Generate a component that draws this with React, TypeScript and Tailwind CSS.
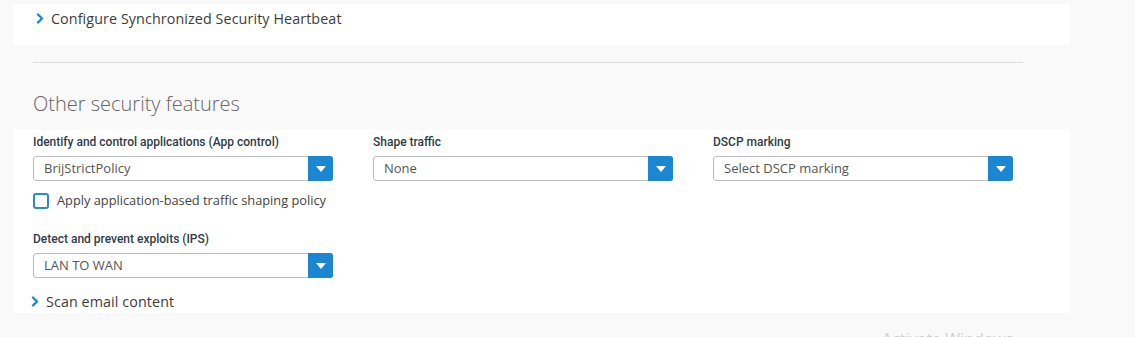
import React from 'react'

const body = { fontFamily: '"Open Sans", "Liberation Sans", sans-serif' }
const labelFont = { fontFamily: 'Roboto, "Liberation Sans", sans-serif' }

function Chevron() {
  return (
    <svg width="8" height="11" viewBox="0 0 8 11" className="shrink-0">
      <path d="M2 1.5 L6 5.5 L2 9.5" stroke="#1b87d2" strokeWidth="2.4" fill="none" strokeLinecap="round" strokeLinejoin="round" />
    </svg>
  )
}

function Select({ value }: { value: string }) {
  return (
    <div className="flex h-[25px] w-[300px] rounded-[3px] border border-[#b9bcc0] bg-white">
      <div className="flex flex-1 items-center pl-[10px] text-[13px] text-[#555]">{value}</div>
      <div className="-my-px -mr-px flex w-[25px] items-center justify-center rounded-r-[3px] bg-[#1b87d2]">
        <svg width="10" height="6" viewBox="0 0 10 6">
          <path d="M0 0 H10 L5 6 Z" fill="#fff" />
        </svg>
      </div>
    </div>
  )
}

function Field({ label, value }: { label: string; value: string }) {
  return (
    <div className="w-[300px]">
      <div className="mb-[4px] h-[20px] text-[12px] font-medium leading-[20px] text-[#2f3b48]" style={labelFont}>
        {label}
      </div>
      <Select value={value} />
    </div>
  )
}

export default function App() {
  return (
    <div className="relative h-[337px] w-[1135px] overflow-hidden bg-[#f9f9f9] pt-[4px]" style={body}>
      {/* Heartbeat panel */}
      <div className="ml-[13px] flex h-[41px] w-[1057px] items-start gap-[7px] bg-white pl-[23px] pt-[6px]">
        <div className="mt-[3px]"><Chevron /></div>
        <span className="text-[14.3px] leading-[17px] tracking-[0.1px] text-[#3c3c3c]">
          Configure Synchronized Security Heartbeat
        </span>
      </div>

      <div className="ml-[33px] mt-[17px] h-[1px] w-[990px] bg-[#dcdcdc]" />

      <h2 className="ml-[33px] mt-[29px] text-[20px] font-light leading-[24px] text-[#666]">Other security features</h2>

      {/* Features panel */}
      <div className="ml-[13px] mt-[13px] h-[184px] w-[1057px] bg-white pl-[20px] pt-[3px]">
        <div className="flex gap-[40px]">
          <Field label="Identify and control applications (App control)" value="BrijStrictPolicy" />
          <Field label="Shape traffic" value="None" />
          <Field label="DSCP marking" value="Select DSCP marking" />
        </div>

        <label className="mt-[10px] flex items-center gap-[8px]">
          <span className="h-[16px] w-[16px] rounded-[3px] border-[2px] border-[#2a8bd4]" />
          <span className="text-[12.8px] text-[#444]">Apply application-based traffic shaping policy</span>
        </label>

        <div className="mt-[19px]">
          <Field label="Detect and prevent exploits (IPS)" value="LAN TO WAN" />
        </div>

        <div className="mt-[15px] flex items-center gap-[7px]">
          <div className="-ml-[2px]"><Chevron /></div>
          <span className="text-[14.3px] leading-[17px] tracking-[0.1px] text-[#3c3c3c]">Scan email content</span>
        </div>
      </div>

      {/* OS watermark, clipped by the window */}
      <div className="absolute left-[882px] top-[327px] text-[16px] leading-[24px] text-[#cfcfcf]">Activate Windows</div>
    </div>
  )
}
